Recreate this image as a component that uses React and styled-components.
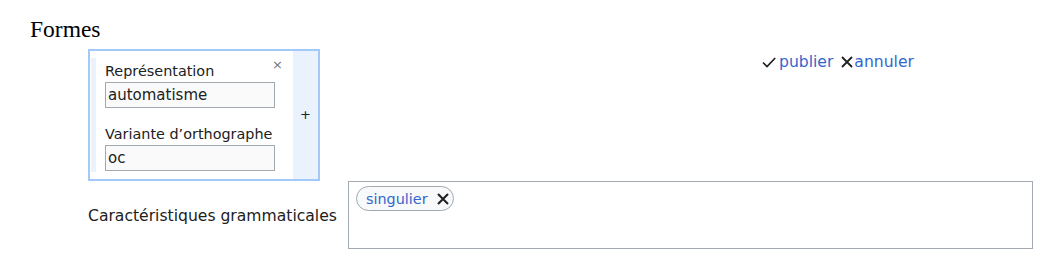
import React from "react";
import styled, { createGlobalStyle } from "styled-components";

const Global = createGlobalStyle`
  html, body { margin: 0; padding: 0; background: #fff; }
  body { font-family: "DejaVu Sans", sans-serif; color: #202122; }
`;

const Page = styled.div`
  width: 1059px;
  height: 276px;
  padding: 0 0 0 30px;
  box-sizing: border-box;
`;

const Heading = styled.h2`
  margin: 0;
  padding-top: 14px;
  font-family: "Liberation Serif", serif;
  font-weight: normal;
  font-size: 23.5px;
  line-height: 30px;
  height: 35px;
  color: #000;
`;

const Body = styled.div`
  padding-left: 58px;
`;

const TopRow = styled.div`
  display: flex;
  align-items: flex-start;
`;

const FormBox = styled.div`
  display: flex;
  width: 232px;
  height: 132px;
  box-sizing: border-box;
  border: 2px solid #a2c9f7;
  background: #fff;
`;

const Gutter = styled.div`
  width: 6px;
  padding: 7px 0;
  display: flex;
`;

const GutterStrip = styled.div`
  flex: 1;
  margin-left: 1px;
  background: #eaf2fe;
`;

const Card = styled.div`
  position: relative;
  width: 197px;
  padding: 10px 0 0 9px;
  box-sizing: border-box;
`;

const Close = styled.span`
  position: absolute;
  top: 7px;
  right: 10px;
  font-size: 13px;
  line-height: 14px;
  color: #72777d;
`;

const Label = styled.div`
  font-size: 14.4px;
  line-height: 20px;
  color: #202122;
  margin-bottom: 1px;
  margin-top: ${(p) => (p.$first ? "0" : "16px")};
  white-space: nowrap;
`;

const Input = styled.div`
  width: 170px;
  height: 26px;
  box-sizing: border-box;
  border: 1px solid #a2a9b1;
  background: #fafafa;
  font-size: 15px;
  line-height: 24px;
  padding-left: 2px;
  color: #202122;
`;

const AddColumn = styled.div`
  flex: 1;
  background: #eaf2fe;
  display: flex;
  align-items: center;
  justify-content: center;
  font-size: 13px;
  color: #202122;
  padding-bottom: 2px;
`;

const Actions = styled.div`
  display: flex;
  align-items: center;
  gap: 8px;
  margin-left: 442px;
  margin-top: 4px;
  font-size: 15.6px;
  line-height: 18px;
`;

const Action = styled.span`
  display: inline-flex;
  align-items: center;
  gap: ${(p) => p.$gap}px;
  color: #3366cc;
`;

const Icon = styled.svg`
  width: ${(p) => p.$w}px;
  height: ${(p) => p.$h}px;
  flex: none;
  overflow: visible;
`;

const FeatureRow = styled.div`
  display: flex;
  align-items: center;
`;

const FeatureLabel = styled.div`
  width: 260px;
  font-size: 15.6px;
  color: #202122;
  padding-top: 2px;
`;

const FeatureBox = styled.div`
  width: 685px;
  height: 68px;
  box-sizing: border-box;
  border: 1px solid #a2a9b1;
  padding: 4px 7px;
`;

const Chip = styled.span`
  display: inline-flex;
  align-items: center;
  height: 25px;
  box-sizing: border-box;
  border: 1px solid #a2a9b1;
  border-radius: 13px;
  background: #f8f9fa;
  padding: 0 4px 0 9px;
  gap: 9px;
  font-size: 14.4px;
  color: #3366cc;
`;

const Check = () => (
  <Icon $w={14} $h={11} viewBox="0 0 14 11">
    <path d="M1 5.5 L5 9.5 L13.2 1" fill="none" stroke="#202122" strokeWidth="1.7" />
  </Icon>
);

const Cross = ({ w, h, sw }) => (
  <Icon $w={w} $h={h} viewBox={`0 0 ${w} ${h}`}>
    <path
      d={`M1 1 L${w - 1} ${h - 1} M${w - 1} 1 L1 ${h - 1}`}
      fill="none"
      stroke="#202122"
      strokeWidth={sw}
    />
  </Icon>
);

export default function App() {
  return (
    <Page>
      <Global />
      <Heading>Formes</Heading>
      <Body>
        <TopRow>
          <FormBox>
            <Gutter>
              <GutterStrip />
            </Gutter>
            <Card>
              <Close>×</Close>
              <Label $first>Représentation</Label>
              <Input>automatisme</Input>
              <Label>Variante d’orthographe</Label>
              <Input>oc</Input>
            </Card>
            <AddColumn>+</AddColumn>
          </FormBox>
          <Actions>
            <Action $gap={3}><Check />publier</Action>
            <Action $gap={1}><Cross w={12} h={12} sw={1.8} />annuler</Action>
          </Actions>
        </TopRow>
        <FeatureRow>
          <FeatureLabel>Caractéristiques grammaticales</FeatureLabel>
          <FeatureBox>
            <Chip>singulier<Cross w={12} h={12} sw={2.1} /></Chip>
          </FeatureBox>
        </FeatureRow>
      </Body>
    </Page>
  );
}
